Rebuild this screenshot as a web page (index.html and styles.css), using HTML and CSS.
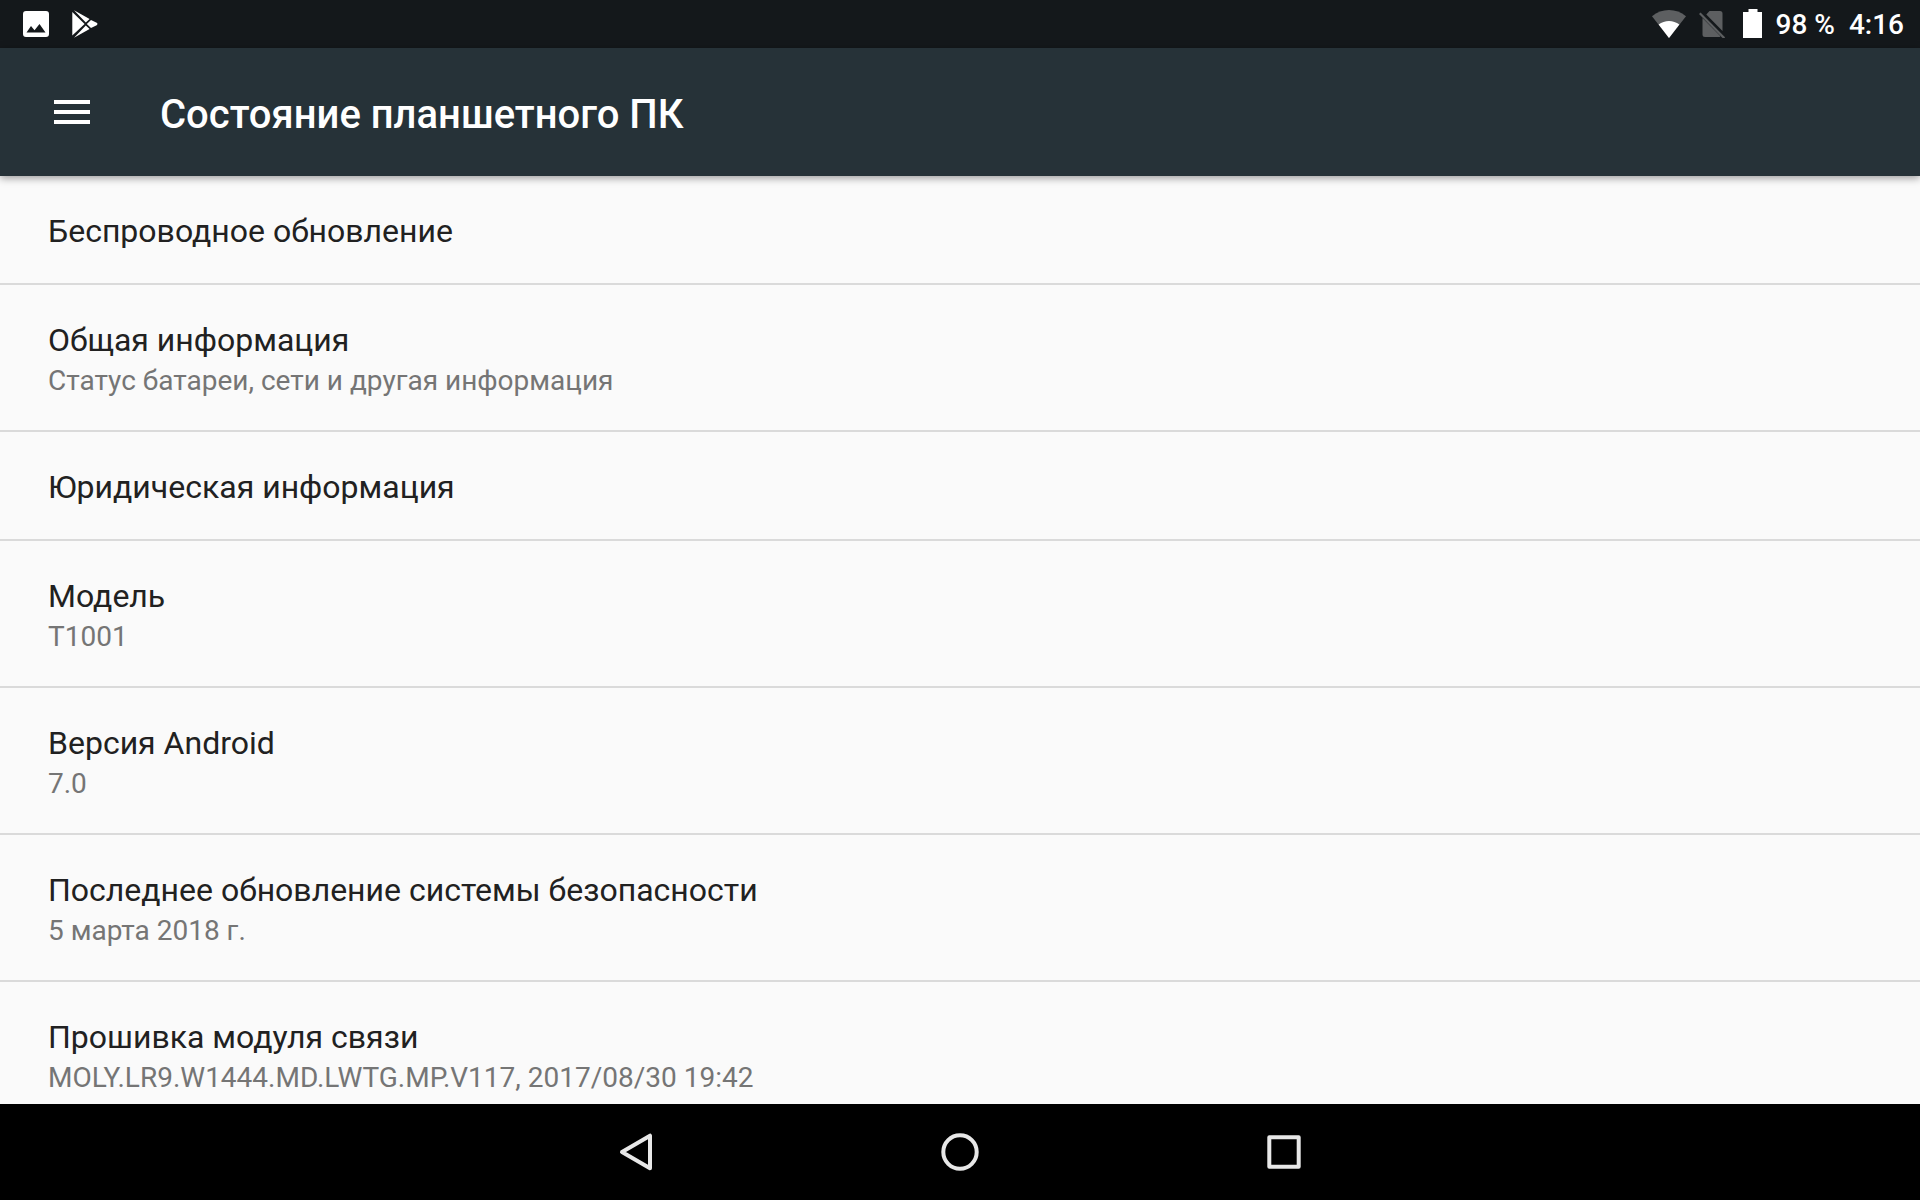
FILE: index.html
```html
<!DOCTYPE html>
<html lang="ru">
<head>
    <meta charset="UTF-8">
    <meta name="viewport" content="width=device-width, initial-scale=1.0">
    <title>Состояние планшетного ПК</title>
    <link rel="stylesheet" href="styles.css">
</head>
<body>

    <!-- Status bar -->
    <div class="status-bar">
        <div class="notifications">
            <svg width="26" height="28" viewBox="0 0 26 28">
                <path fill="#fff" fill-rule="evenodd" d="M3 1h20a3 3 0 0 1 3 3v20a3 3 0 0 1-3 3H3a3 3 0 0 1-3-3V4a3 3 0 0 1 3-3zM3.500 22.500h19L16.500 14l-5 6.300L8 16z"/>
            </svg>
            <svg width="26" height="28" viewBox="0 0 26 28">
                <path fill="#fff" d="M.3 2v23.600L12.600 14zM2 .3L13.800 12.500l3.800-3.400zM2 27.700l11.800-12.200 3.800 3.400zM19 10l-4.200 4 4.200 4 5.700-2.800c1-.6 1-1.800 0-2.400z"/>
            </svg>
        </div>
        <div class="system-icons">
            <svg width="34" height="28" viewBox="1 0 34 28">
                <path fill="#5d5f61" d="M1 6.300C10.500-2 25.500-2 35 6.300L18 28z"/>
                <path fill="#fff" d="M7.600 14.600c6.200-4.800 14.600-4.800 20.800 0L18 28z"/>
            </svg>
            <svg class="no-sim" width="26" height="28" viewBox="0 0 26 28">
                <path fill="#5d5f61" d="M10.500 1H21a2.500 2.500 0 0 1 2.500 2.500V21L7.300 4.500zM3.500 8L21.500 26.300l-.8.700H6a2.500 2.500 0 0 1-2.500-2.500z"/>
                <path stroke="#5d5f61" stroke-width="2.200" d="M.8 3.200l24.500 25"/>
            </svg>
            <svg width="19" height="30" viewBox="0 0 19 30">
                <path fill="#fff" d="M5.500 0h9v3H19v26H0V3h5.500z"/>
            </svg>
            <span class="battery-level">98 %</span>
            <span class="clock">4:16</span>
        </div>
    </div>

    <!-- Toolbar -->
    <header class="toolbar">
        <button class="menu-button" aria-label="Меню">
            <svg width="36" height="24" viewBox="0 0 36 24">
                <path fill="#fff" d="M0 0h36v4H0zM0 10h36v4H0zM0 20h36v4H0z"/>
            </svg>
        </button>
        <h1>Состояние планшетного ПК</h1>
    </header>

    <!-- Settings list -->
    <main class="settings">
        <a class="item" href="#">
            <span class="title">Беспроводное обновление</span>
        </a>
        <a class="item" href="#">
            <span class="title">Общая информация</span>
            <span class="summary">Статус батареи, сети и другая информация</span>
        </a>
        <a class="item" href="#">
            <span class="title">Юридическая информация</span>
        </a>
        <a class="item" href="#">
            <span class="title">Модель</span>
            <span class="summary">T1001</span>
        </a>
        <a class="item" href="#">
            <span class="title">Версия Android</span>
            <span class="summary">7.0</span>
        </a>
        <a class="item" href="#">
            <span class="title">Последнее обновление системы безопасности</span>
            <span class="summary">5 марта 2018 г.</span>
        </a>
        <a class="item" href="#">
            <span class="title">Прошивка модуля связи</span>
            <span class="summary">MOLY.LR9.W1444.MD.LWTG.MP.V117, 2017/08/30 19:42</span>
        </a>
    </main>

    <!-- Navigation bar -->
    <nav class="nav-bar">
        <button aria-label="Назад">
            <svg width="40" height="40" viewBox="0 0 40 40">
                <path d="M6 20L34 3.700v32.600z"/>
            </svg>
        </button>
        <button aria-label="Домой">
            <svg width="40" height="40" viewBox="0 0 40 40">
                <circle cx="20" cy="20" r="16.700"/>
            </svg>
        </button>
        <button aria-label="Недавние">
            <svg width="40" height="40" viewBox="0 0 40 40">
                <rect x="5.300" y="5.300" width="29.400" height="29.400"/>
            </svg>
        </button>
    </nav>

</body>
</html>
```
FILE: styles.css
```css
* {
    margin: 0;
    padding: 0;
    box-sizing: border-box;
}

body {
    font-family: Roboto, sans-serif;
    background-color: #fafafa;
    display: flex;
    flex-direction: column;
    height: 100vh;
    overflow: hidden;
}

svg {
    display: block;
    flex-shrink: 0;
}

button {
    background: none;
    border: none;
    cursor: pointer;
}

/* Status bar */
.status-bar {
    display: flex;
    justify-content: space-between;
    align-items: center;
    flex-shrink: 0;
    height: 48px;
    padding: 0 16px 0 23px;
    background-color: #14181b;
    color: white;
    font-size: 28px;
    font-weight: 500;
    line-height: 48px;
}

.notifications {
    display: flex;
    gap: 23px;
}

.system-icons {
    display: flex;
    align-items: center;
    gap: 13px;
}

.no-sim {
    margin-right: 5px;
}

.battery-level, .clock {
    padding-top: 2px;
}

.clock {
    margin-left: 1px;
}

/* Toolbar */
.toolbar {
    display: flex;
    align-items: center;
    flex-shrink: 0;
    height: 128px;
    padding-left: 54px;
    background-color: #263238;
    box-shadow: 0 2px 8px rgba(0, 0, 0, 0.4);
    position: relative;
}

.menu-button {
    margin-right: 70px;
}

.toolbar h1 {
    padding-top: 6px;
    color: white;
    font-size: 40px;
    font-weight: 500;
    line-height: 48px;
}

/* Settings list */
.settings {
    flex: 1;
    min-height: 0;
    overflow: hidden;
}

.item {
    display: block;
    padding: 34px 48px 30px;
    border-bottom: 2px solid #dadada;
    text-decoration: none;
}

.title {
    display: block;
    color: #212121;
    font-size: 32px;
    line-height: 43px;
}

.summary {
    display: block;
    color: #757575;
    font-size: 28px;
    line-height: 38px;
}

/* Navigation bar */
.nav-bar {
    display: flex;
    justify-content: center;
    flex-shrink: 0;
    height: 96px;
    background-color: black;
}

.nav-bar button {
    display: flex;
    justify-content: center;
    align-items: center;
    width: 324px;
}

.nav-bar svg {
    fill: none;
    stroke: #e8e8e8;
    stroke-width: 4;
    stroke-linejoin: round;
}
```
